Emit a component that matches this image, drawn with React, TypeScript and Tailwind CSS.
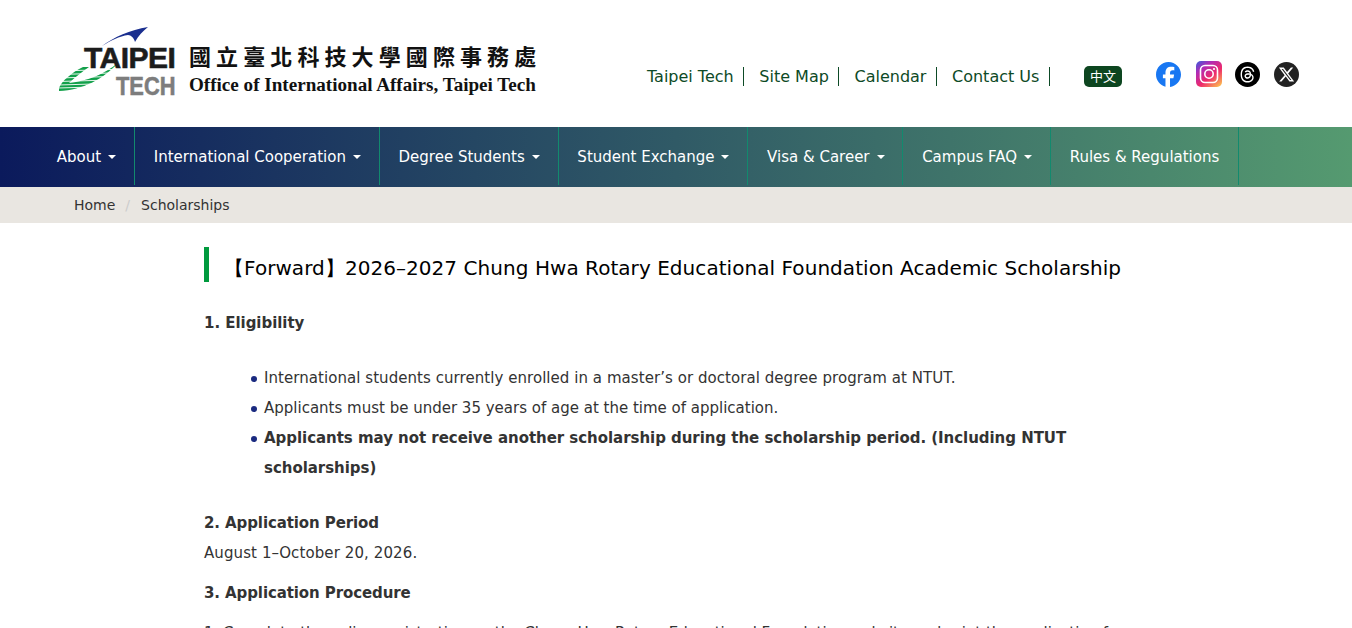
import { FaFacebook, FaThreads, FaXTwitter } from "react-icons/fa6";

const TOP_LINKS = ["Taipei Tech", "Site Map", "Calendar", "Contact Us"];

const NAV = [
  { label: "About", caret: true },
  { label: "International Cooperation", caret: true },
  { label: "Degree Students", caret: true },
  { label: "Student Exchange", caret: true },
  { label: "Visa & Career", caret: true },
  { label: "Campus FAQ", caret: true },
  { label: "Rules & Regulations", caret: false },
];

const BULLET =
  "relative before:absolute before:left-[-13px] before:top-[13px] before:h-[6px] before:w-[6px] before:rounded-full before:bg-[#1a2a80]";

function Logo() {
  return (
    <div className="relative mt-[3px] h-[76px] w-[120px] shrink-0">
      <svg className="absolute left-0 top-0" width="120" height="76" viewBox="0 0 120 76">
        {/* blue swoosh */}
        <path d="M44 19 C56 10 72 3 90 0 C85 4 80 9 77 15 C76 11 73 8 70 8 C62 9 52 14 44 19 Z" fill="#1a2f8f" />
        {/* green crescent, cut into stripes */}
        <path d="M25 40 C13 46 4 54 1 61 L1 64 C25 63 45 52 60 36 C46 47 30 54 11 56 C17 50 24 45 31 40 Z" fill="#12a04a" />
        <g stroke="#fff" strokeWidth="0.9">
          <path d="M0 44 L70 42" />
          <path d="M0 47.5 L70 45.5" />
          <path d="M0 51 L70 49" />
          <path d="M0 54.5 L70 52.5" />
          <path d="M0 58 L70 56" />
          <path d="M0 61 L70 59" />
        </g>
      </svg>
      <div className="absolute left-[26px] top-[15px] font-['Liberation_Sans',sans-serif] text-[30px] font-bold leading-[32px] tracking-[-0.5px] text-[#1c1c1c] [-webkit-text-stroke:0.6px_#1c1c1c]">
        TAIPEI
      </div>
      <div className="absolute left-[58px] top-[44px] origin-left scale-x-[0.84] font-['Liberation_Sans',sans-serif] text-[26px] font-bold leading-[30px] text-[#7d7d7d] [-webkit-text-stroke:0.6px_#7d7d7d]">
        TECH
      </div>
    </div>
  );
}

function Instagram() {
  return (
    <svg width="26" height="26" viewBox="0 0 26 26">
      <defs>
        <linearGradient id="ig" x1="0.9" y1="1" x2="0.1" y2="0">
          <stop offset="0" stopColor="#fdc04f" />
          <stop offset="0.4" stopColor="#ee2a6b" />
          <stop offset="0.75" stopColor="#b02bb5" />
          <stop offset="1" stopColor="#4a55d6" />
        </linearGradient>
      </defs>
      <rect width="26" height="26" rx="5" fill="url(#ig)" />
      <rect x="4.5" y="4.5" width="17" height="17" rx="4.5" fill="none" stroke="#fff" strokeWidth="1.6" />
      <circle cx="13" cy="13" r="4.2" fill="none" stroke="#fff" strokeWidth="1.6" />
      <circle cx="18" cy="8" r="1.1" fill="#fff" />
    </svg>
  );
}

function Caret() {
  return <span className="ml-[7px] mr-[-1px] inline-block h-0 w-0 border-x-[4px] border-t-[4px] border-x-transparent border-t-white align-middle" />;
}

export default function App() {
  return (
    <div className="h-screen overflow-hidden bg-white font-['DejaVu_Sans',sans-serif] text-[15px] text-[#333]">
      <header className="flex h-[127px] items-center pl-[58px] pr-[53px]">
        <Logo />
        <div className="ml-[11px] mt-[13px] flex flex-col">
          <div className="whitespace-nowrap font-['Noto_Sans_CJK_TC',sans-serif] text-[22px] font-bold leading-[30px] tracking-[5.1px] text-[#111]">
            國立臺北科技大學國際事務處
          </div>
          <div className="whitespace-nowrap font-['Liberation_Serif',serif] text-[19.1px] font-bold leading-[30px] text-[#111]">
            Office of International Affairs, Taipei Tech
          </div>
        </div>
        <nav className="ml-auto mr-[34px] mt-[25px] flex items-center">
          {TOP_LINKS.map((t) => (
            <a key={t} className="mr-[15px] border-r border-[#0d4a26] pr-[9.6px] text-[16px] leading-[19px] text-[#0d4a26] last:mr-0">
              {t}
            </a>
          ))}
        </nav>
        <a className="mr-[34px] mt-[25px] flex h-[21px] w-[38px] items-center justify-center rounded-[5px] bg-[#0d4620] font-['Noto_Sans_CJK_TC',sans-serif] text-[13px] text-white">
          中文
        </a>
        <div className="mt-[21px] flex items-center">
          <FaFacebook className="mr-[15px] text-[#1877f2]" size={25} />
          <Instagram />
          <span className="ml-[13px] mr-[14px] flex h-[25px] w-[25px] items-center justify-center rounded-full bg-black text-white">
            <FaThreads size={17} />
          </span>
          <span className="flex h-[25px] w-[25px] items-center justify-center rounded-full bg-[#222] text-white">
            <FaXTwitter size={17} />
          </span>
        </div>
      </header>

      <div className="flex h-[60px] bg-linear-to-r/srgb from-[#0b1a5c] to-[#559a70] pl-[38px]">
        {NAV.map((n) => (
          <a key={n.label} className="flex h-[58px] items-center whitespace-nowrap border-r border-[#128a6e] px-[18.8px] pt-[2px] text-[15px] text-white">
            {n.label}
            {n.caret && <Caret />}
          </a>
        ))}
      </div>

      <div className="flex h-[36px] items-center bg-[#e9e6e1] pl-[74px] text-[14px] text-[#333]">
        <span>Home</span>
        <span className="pl-[10px] pr-[11px] text-[#ccc]">/</span>
        <span>Scholarships</span>
      </div>

      <main className="px-[204px] pt-[24px]">
        <h1 className="flex h-[35px] items-center border-l-[5px] border-[#009a3e] pl-[15px] pt-[7px] text-[20px] font-normal tracking-[0.05px] text-black">
          【Forward】2026–2027 Chung Hwa Rotary Educational Foundation Academic Scholarship
        </h1>
        <div className="mt-[26px] leading-[30px] tracking-[0.055px]">
          <p className="font-bold tracking-[-0.04px]">1. Eligibility</p>
          <ul className="mb-[25px] mt-[25px] pl-[60px]">
            <li className={BULLET}>International students currently enrolled in a master’s or doctoral degree program at NTUT.</li>
            <li className={`${BULLET} tracking-[0px]`}>Applicants must be under 35 years of age at the time of application.</li>
            <li className={`${BULLET} font-bold tracking-[-0.04px]`}>
              Applicants may not receive another scholarship during the scholarship period. (Including NTUT scholarships)
            </li>
          </ul>
          <p className="font-bold tracking-[-0.1px]">2. Application Period</p>
          <p className="tracking-[0.1px]">August 1–October 20, 2026.</p>
          <p className="mt-[10px] font-bold tracking-[-0.1px]">3. Application Procedure</p>
          <p className="mt-[10px] whitespace-nowrap tracking-[0px]">1. Complete the online registration on the Chung Hwa Rotary Educational Foundation website and print the application form.</p>
        </div>
      </main>
    </div>
  );
}
